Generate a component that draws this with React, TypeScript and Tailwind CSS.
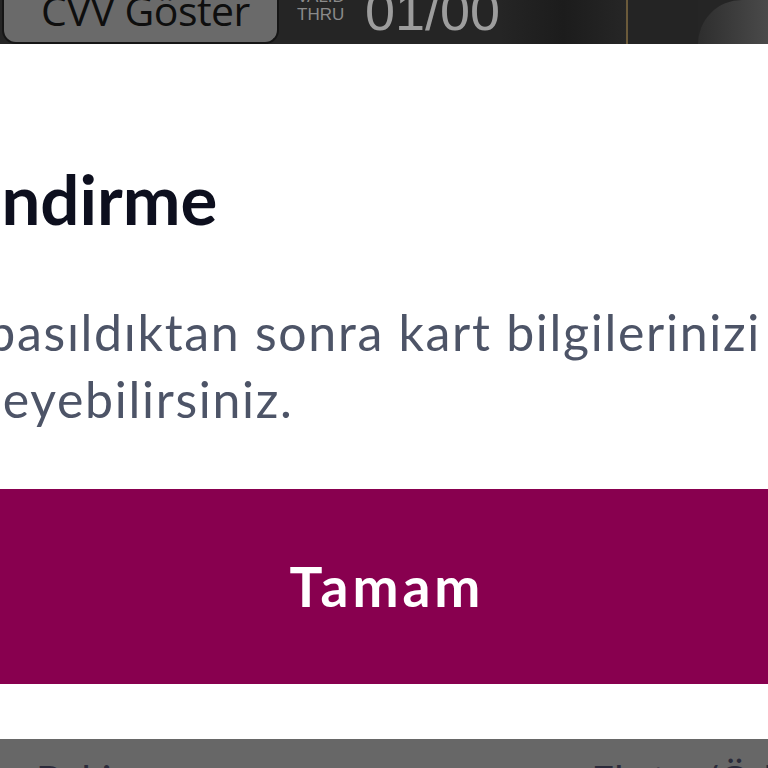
import { CSSProperties } from 'react'

const font: CSSProperties = { fontFamily: 'Lato, "Noto Sans", sans-serif' }

function CardStrip() {
  return (
    <div className="relative h-[44px] shrink-0 overflow-hidden bg-[#252525] flex items-end">
      {/* CVV button, top edge runs off the screen */}
      <div className="ml-[2px] h-[44px] w-[277px] shrink-0 rounded-b-[14px] border-2 border-t-0 border-[#151515] bg-[#6a6a6a] flex items-end justify-center pb-[17px] pl-[10px]">
        <span
          className="text-[41px] leading-[30px] font-medium text-[#0e0e0e] tracking-[-0.5px]"
          style={{ fontFamily: '"Open Sans", "Noto Sans", sans-serif' }}
        >
          CVV Göster
        </span>
      </div>

      <div className="flex items-end gap-[20px] pl-[18px] pb-[20px]">
        <div className="flex flex-col text-[17px] leading-[18px] text-[#8a8a8a]" style={{ fontFamily: '"Liberation Sans", sans-serif' }}>
          <span>VALID</span>
          <span>THRU</span>
        </div>
        <span
          className="text-[54px] leading-[40px] text-[#9d9d9d] -mb-[7px]"
          style={{ fontFamily: '"Liberation Sans", sans-serif' }}
        >
          01/00
        </span>
      </div>

      <div className="flex-1 self-stretch bg-gradient-to-r from-[#252525] via-[#1c1c1c] to-[#262626]" />
      <div className="w-[2px] self-stretch bg-[#6b5a3a]" />
      <div className="w-[70px] self-stretch bg-[#242424]" />
      <div className="w-[70px] self-stretch bg-gradient-to-r from-[#2e2e2e] to-[#4a4a4a] rounded-tl-[60px]" />
    </div>
  )
}

function Dialog() {
  return (
    <div className="h-[695px] shrink-0 bg-white overflow-hidden" style={font}>
      <div className="-ml-[186px] pt-[115px]">
        <h2 className="whitespace-nowrap text-[69px] leading-[80px] font-bold text-[#0d0f1e]">
          Bilgilendirme
        </h2>
        <p className="-ml-[10px] mt-[60px] whitespace-nowrap text-[50px] leading-[67px] tracking-[1.7px] text-[#4d5467]">
          Butona basıldıktan sonra kart bilgilerinizi
          <br />
          görüntüleyebilirsiniz.
        </p>
      </div>
      <button className="mt-[56px] h-[195px] w-full bg-[#88004f] text-white text-[55px] tracking-[4px] font-bold flex items-center justify-center pl-[6px]">
        Tamam
      </button>
    </div>
  )
}

function BottomBar() {
  return (
    <div className="flex-1 bg-[#676767] flex pt-[21px] text-[40px] leading-none text-[#2b2b3a]" style={font}>
      <span className="ml-[36px]">Bakiye</span>
      <span className="ml-auto mr-[-80px]">Ekstre/Ödeme</span>
    </div>
  )
}

export default function App() {
  return (
    <div className="w-[768px] h-[768px] overflow-hidden flex flex-col bg-white">
      <CardStrip />
      <Dialog />
      <BottomBar />
    </div>
  )
}
